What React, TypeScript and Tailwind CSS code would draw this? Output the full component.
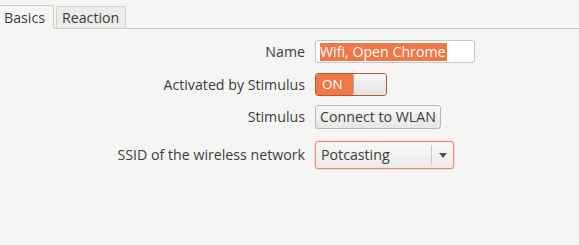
import React from "react";

export default function App() {
  return (
    <div
      className="w-[579px] h-[245px] bg-[#f5f5f4] text-[#3c3c3c] text-[14.2px] overflow-hidden"
      style={{ fontFamily: '"Open Sans", "Noto Sans", sans-serif' }}
    >
      {/* Tabs */}
      <div className="flex items-end h-[29px] border-b border-[#c9c9c6]">
        <div className="relative h-[24px] w-[54px] -mb-px bg-[#f6f6f5] border border-l-0 border-b-0 border-[#cfcfcc] rounded-tr-[3px] flex items-center pl-[4px] pt-[2px] leading-none">
          Basics
        </div>
        <div className="ml-[2px] h-[22px] w-[70px] bg-[#ececeb] border border-b-0 border-[#d2d2cf] rounded-t-[3px] flex items-center pl-[5px] pt-[1px] leading-none">
          Reaction
        </div>
      </div>

      {/* Form */}
      <div className="grid grid-cols-[305px_auto] gap-x-[10px] items-center mt-[11px]">
        <div className="text-right leading-none pt-[1px]">Name</div>
        <div className="h-[23px] w-[160px] bg-white border border-[#c6c6c3] rounded-[3px] flex items-center pl-[4px]">
          <span className="bg-[#f07746] text-white leading-[18px] pr-[1px] whitespace-nowrap">Wifi, Open Chrome</span>
        </div>

        <div className="text-right leading-none mt-[10px] pt-[1px]">Activated by Stimulus</div>
        <div className="mt-[10px] h-[23px] w-[72px] flex rounded-[3px] border border-[#b35a35] overflow-hidden">
          <div className="w-[37px] bg-[#f07746] text-white flex items-center pl-[6px] text-[13.5px]">ON</div>
          <div className="flex-1 bg-gradient-to-b from-[#f8f8f8] to-[#e2e2e0] border-l border-[#a9a9a6] rounded-[3px]"></div>
        </div>

        <div className="text-right leading-none mt-[9px] pt-[1px]">Stimulus</div>
        <div className="mt-[9px] h-[24px] w-[126px] bg-gradient-to-b from-[#f8f8f7] to-[#e6e6e4] border border-[#b9b9b6] rounded-[3px] flex items-center justify-center whitespace-nowrap">
          Connect to WLAN
        </div>

        <div className="text-right leading-none mt-[12px] pt-[1px]">SSID of the wireless network</div>
        <div className="mt-[12px] h-[28px] w-[139px] bg-gradient-to-b from-[#f8f8f7] to-[#ebebea] border border-[#ef8a62] rounded-[3px] shadow-[0_0_0_1px_rgba(240,119,70,0.15)] flex items-center">
          <span className="flex-1 pl-[5px]">Potcasting</span>
          <div className="w-px h-[20px] bg-[#c8c8c5]"></div>
          <div className="w-[21px] flex justify-center">
            <svg width="8" height="5" viewBox="0 0 8 5">
              <path d="M0 0 L8 0 L4 5 Z" fill="#505050" />
            </svg>
          </div>
        </div>
      </div>
    </div>
  );
}
